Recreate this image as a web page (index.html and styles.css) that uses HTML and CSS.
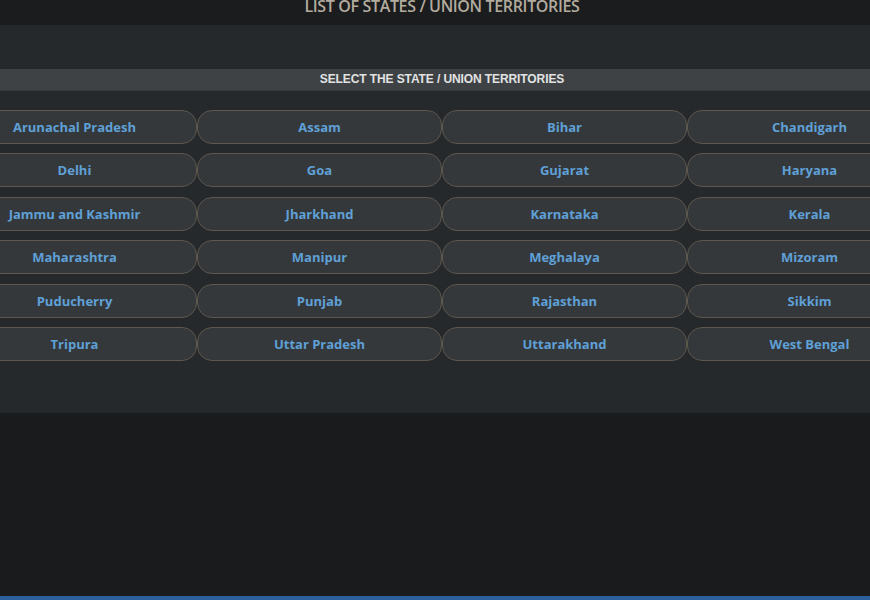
FILE: index.html
```html
<!DOCTYPE html>
<html lang="en">
<head>
  <meta charset="UTF-8" />
  <title>List of States / Union Territories</title>
  <link rel="stylesheet" href="styles.css">
</head>
<body>
  <div class="page">
    <div class="title-bar">
      <h1>LIST OF STATES / UNION TERRITORIES</h1>
    </div>

    <div class="panel">
      <div class="panel-head">SELECT THE STATE / UNION TERRITORIES</div>

      <div class="state-grid">
        <button class="state">Arunachal Pradesh</button>
        <button class="state">Assam</button>
        <button class="state">Bihar</button>
        <button class="state">Chandigarh</button>
        <button class="state">Delhi</button>
        <button class="state">Goa</button>
        <button class="state">Gujarat</button>
        <button class="state">Haryana</button>
        <button class="state">Jammu and Kashmir</button>
        <button class="state">Jharkhand</button>
        <button class="state">Karnataka</button>
        <button class="state">Kerala</button>
        <button class="state">Maharashtra</button>
        <button class="state">Manipur</button>
        <button class="state">Meghalaya</button>
        <button class="state">Mizoram</button>
        <button class="state">Puducherry</button>
        <button class="state">Punjab</button>
        <button class="state">Rajasthan</button>
        <button class="state">Sikkim</button>
        <button class="state">Tripura</button>
        <button class="state">Uttar Pradesh</button>
        <button class="state">Uttarakhand</button>
        <button class="state">West Bengal</button>
      </div>
    </div>
  </div>

  <div class="footer-bar"></div>
</body>
</html>
```

FILE: styles.css
```css
html, body {
  margin: 0;
  padding: 0;
  height: 100%;
}

body {
  background-color: #1a1b1d;
  font-family: "Open Sans", sans-serif;
  overflow: hidden;
  position: relative;
}

.page {
  width: 980px;
  margin-left: -48px;
}

.title-bar {
  height: 25px;
  background: #1b1c1e;
  overflow: hidden;
}

.title-bar h1 {
  margin: -4px 0 0;
  text-align: center;
  font-size: 16px;
  line-height: 20px;
  font-weight: 600;
  letter-spacing: -0.35px;
  color: #b3ab9d;
}

.panel {
  background: #26292c;
  padding: 44px 0 52px;
}

.panel-head {
  height: 21px;
  line-height: 21px;
  background: #3e4245;
  border-bottom: 1px solid #35383b;
  text-align: center;
  font-family: "Liberation Sans", Arial, sans-serif;
  font-size: 12px;
  font-weight: bold;
  letter-spacing: -0.1px;
  color: #e2e2e2;
  margin-bottom: 19px;
}

.state-grid {
  display: grid;
  grid-template-columns: repeat(4, 245px);
  row-gap: 9.4px;
}

.state {
  height: 34px;
  margin: 0;
  background: #35383b;
  border: 1px solid #5d574d;
  border-radius: 15px;
  color: #5fa0d6;
  font-family: "Open Sans", sans-serif;
  font-size: 13px;
  font-weight: 700;
  cursor: pointer;
}

.state:hover {
  background: #3b3f42;
}

.footer-bar {
  position: absolute;
  left: 0;
  right: 0;
  bottom: 0;
  height: 4px;
  background: #2c5f9b;
}
```
